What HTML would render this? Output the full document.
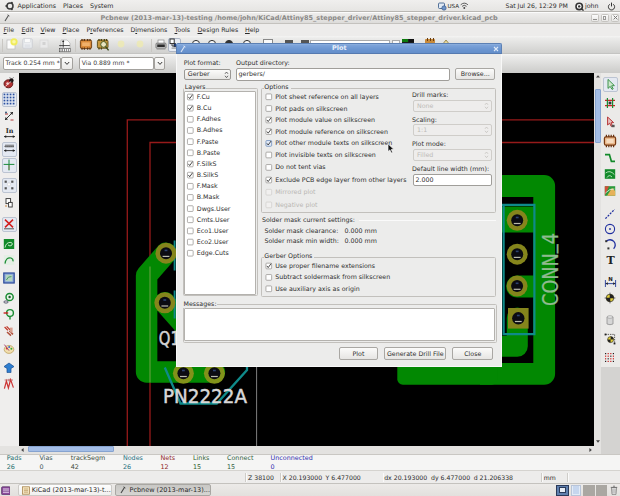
<!DOCTYPE html>
<html><head><meta charset="utf-8"><title>Pcbnew Plot</title>
<style>
html,body{margin:0;padding:0}
body{width:620px;height:496px;position:relative;overflow:hidden;background:#edeceb;font-family:"DejaVu Sans","Liberation Sans",sans-serif;font-size:6.3px;color:#2e2e2e}
.a{position:absolute}
.t{position:absolute;white-space:nowrap}
.btn{position:absolute;box-sizing:border-box;border:0.8px solid #a9a7a3;border-radius:2px;background:linear-gradient(#fbfbfa,#e6e5e3);text-align:center;color:#2e2e2e}
.combo{position:absolute;box-sizing:border-box;border:0.8px solid #9a9894;border-radius:2px;background:linear-gradient(#fbfbfa,#e6e5e3)}
.entry{position:absolute;box-sizing:border-box;border:0.8px solid #a09e9a;border-radius:2px;background:#fff}
.grp{position:absolute;box-sizing:border-box;border:0.8px solid #c2c0bc;border-radius:1.5px}
u{text-decoration:underline;text-decoration-thickness:0.5px;text-underline-offset:0.8px}
</style></head><body>

<div class="a" style="left:0px;top:0px;width:620px;height:12px;background:linear-gradient(#f0efee,#e6e5e3);border-bottom:0.8px solid #b9b7b3;box-sizing:border-box"></div>
<svg class="a" style="left:5px;top:1px" width="10" height="10" viewBox="0 0 10 10"><circle cx="5" cy="5" r="3" fill="none" stroke="#3a3a3a" stroke-width="1.5"/><circle cx="1.3" cy="5" r="1" fill="#3a3a3a"/><circle cx="6.9" cy="1.7" r="1" fill="#3a3a3a"/><circle cx="6.9" cy="8.3" r="1" fill="#3a3a3a"/></svg>
<div class="t" style="left:17.5px;top:1.50px;line-height:8px;font-size:6.3px;color:#2a2a2a;">Applications</div>
<div class="t" style="left:63px;top:1.50px;line-height:8px;font-size:6.3px;color:#2a2a2a;">Places</div>
<div class="t" style="left:90px;top:1.50px;line-height:8px;font-size:6.3px;color:#2a2a2a;">System</div>
<svg class="a" style="left:438px;top:1.5px" width="9" height="9" viewBox="0 0 9 9"><rect x="0.5" y="1" width="6" height="5.5" rx="1" fill="#dfe9f5" stroke="#44648f" stroke-width="0.9"/><circle cx="6" cy="6" r="2.2" fill="#6f95c9" stroke="#2f4f7f" stroke-width="0.6"/></svg>
<div class="t" style="left:447.5px;top:1.50px;line-height:8px;font-size:5.6px;color:#2a2a2a;">USA</div>
<svg class="a" style="left:460.3px;top:2px" width="8.6" height="7.8" viewBox="0 0 10 9"><path d="M0.8 3.2 Q5 -0.6 9.2 3.2" fill="none" stroke="#444" stroke-width="1"/><path d="M2.4 5 Q5 2.6 7.6 5" fill="none" stroke="#444" stroke-width="1"/><circle cx="5" cy="7" r="1.1" fill="#444"/></svg>
<div class="t" style="left:505.5px;top:1.50px;line-height:8px;font-size:6.2px;color:#2a2a2a;">Sat Jul 26, 12:29 PM</div>
<svg class="a" style="left:574.5px;top:1.5px" width="9" height="9" viewBox="0 0 9 9"><circle cx="4.2" cy="4.4" r="3.2" fill="#fff" stroke="#333" stroke-width="1.6"/><circle cx="4.2" cy="4.4" r="1.2" fill="#333"/><path d="M6 6.5 L8.6 8.6" stroke="#333" stroke-width="1.4"/></svg>
<div class="t" style="left:585px;top:1.50px;line-height:8px;font-size:6.3px;color:#2a2a2a;">john</div>
<svg class="a" style="left:607px;top:1.5px" width="9" height="9" viewBox="0 0 9 9"><path d="M2.7 2.3 A3.1 3.1 0 1 0 6.3 2.3" fill="none" stroke="#333" stroke-width="1"/><path d="M4.5 0.6 V4.4" stroke="#333" stroke-width="1"/></svg>
<div class="a" style="left:0px;top:12px;width:620px;height:11.5px;background:linear-gradient(#eeedec,#dddcda);border-top:0.6px solid #fbfbfb;border-bottom:0.6px solid #c4c2be;box-sizing:border-box"></div>
<svg class="a" style="left:4px;top:14px" width="6" height="8" viewBox="0 0 6 8"><path d="M1 7 L4.6 1.2" stroke="#555" stroke-width="1.1"/><path d="M3.6 0.8 L5.4 2" stroke="#555" stroke-width="1"/></svg>
<div class="t" style="left:100.5px;top:13.60px;line-height:8px;font-size:6.5px;color:#8a8987;font-weight:bold;">Pcbnew (2013-mar-13)-testing /home/john/KiCad/Attiny85_stepper_driver/Attiny85_stepper_driver.kicad_pcb</div>
<div class="a" style="left:590.5px;top:13.5px;width:8.5px;height:8.5px;box-sizing:border-box;border:0.7px solid #c6c4c0;border-radius:1.5px;background:linear-gradient(#fbfbfb,#e9e8e6)"></div>
<div class="a" style="left:592.8px;top:19.3px;width:3.8px;height:0.9px;background:#8f8e8c"></div>
<div class="a" style="left:600.5px;top:13.5px;width:8.5px;height:8.5px;box-sizing:border-box;border:0.7px solid #c6c4c0;border-radius:1.5px;background:linear-gradient(#fbfbfb,#e9e8e6)"></div>
<div class="a" style="left:603.1px;top:15.8px;width:3.2px;height:3.8px;box-sizing:border-box;border:0.8px solid #9a9997"></div>
<div class="a" style="left:610.5px;top:13.5px;width:8.5px;height:8.5px;box-sizing:border-box;border:0.7px solid #c6c4c0;border-radius:1.5px;background:linear-gradient(#fbfbfb,#e9e8e6)"></div>
<svg class="a" style="left:612.5px;top:15.3px" width="5" height="5" viewBox="0 0 5 5"><path d="M0.6 0.6 L4.4 4.4 M4.4 0.6 L0.6 4.4" stroke="#7c7b79" stroke-width="1"/></svg>
<div class="a" style="left:0px;top:23.5px;width:620px;height:12.5px;background:#edeceb"></div>
<div class="t" style="left:3.5px;top:25.60px;line-height:8px;font-size:6.3px;color:#2a2a2a;"><u>F</u>ile</div>
<div class="t" style="left:21.5px;top:25.60px;line-height:8px;font-size:6.3px;color:#2a2a2a;"><u>E</u>dit</div>
<div class="t" style="left:40.5px;top:25.60px;line-height:8px;font-size:6.3px;color:#2a2a2a;"><u>V</u>iew</div>
<div class="t" style="left:62.5px;top:25.60px;line-height:8px;font-size:6.3px;color:#2a2a2a;"><u>P</u>lace</div>
<div class="t" style="left:86.5px;top:25.60px;line-height:8px;font-size:6.3px;color:#2a2a2a;">P<u>r</u>eferences</div>
<div class="t" style="left:130.5px;top:25.60px;line-height:8px;font-size:6.3px;color:#2a2a2a;">D<u>i</u>mensions</div>
<div class="t" style="left:174.5px;top:25.60px;line-height:8px;font-size:6.3px;color:#2a2a2a;"><u>T</u>ools</div>
<div class="t" style="left:197.5px;top:25.60px;line-height:8px;font-size:6.3px;color:#2a2a2a;"><u>D</u>esign Rules</div>
<div class="t" style="left:245px;top:25.60px;line-height:8px;font-size:6.3px;color:#2a2a2a;"><u>H</u>elp</div>
<div class="a" style="left:0px;top:36px;width:620px;height:18px;background:linear-gradient(#f4f4f3 0%,#ebebea 14%,#d0d0ce 100%);border-bottom:1px solid #c4c4c2;box-sizing:border-box"></div>
<div class="a" style="left:0px;top:54px;width:620px;height:18.5px;background:linear-gradient(#f5f5f4 0%,#ebebea 14%,#cbcbc9 100%)"></div>
<div class="a" style="left:1.5px;top:38.5px;width:0.7px;height:13px;background:#c9c7c3"></div>
<div class="a" style="left:75px;top:38.5px;width:0.7px;height:13px;background:#c9c7c3"></div>
<div class="a" style="left:151px;top:38.5px;width:0.7px;height:13px;background:#c9c7c3"></div>
<svg class="a" style="left:6px;top:37.5px" width="12" height="12" viewBox="0 0 12 12"><rect x="1" y="2" width="8" height="9" fill="#fcfcfc" stroke="#b9b9b9" stroke-width="0.7"/><circle cx="8" cy="3.8" r="3.6" fill="#f0ec5c"/><circle cx="8" cy="3.8" r="1.8" fill="#fbf8a6"/></svg>
<svg class="a" style="left:22px;top:38px" width="11" height="11" viewBox="0 0 11 11"><rect x="0.8" y="0.8" width="9.4" height="9.4" rx="0.8" fill="#eceef1" stroke="#c6c9cf" stroke-width="0.8"/><rect x="2.6" y="0.8" width="5.6" height="3.8" fill="#fafafa" stroke="#d0d3d8" stroke-width="0.5"/><rect x="2.6" y="6.4" width="5.8" height="3.8" fill="#dfe2e7"/></svg>
<svg class="a" style="left:39px;top:38.5px" width="10" height="10" viewBox="0 0 10 10"><rect x="1" y="1" width="8" height="8" fill="#e9e9e9" stroke="#d6d6d6" stroke-width="0.7"/><rect x="3.5" y="3" width="3" height="3" fill="#d2d2d2"/></svg>
<svg class="a" style="left:58px;top:38.5px" width="14" height="14" viewBox="0 0 14 14"><path d="M3 1 H9 L12 4 V9 H3 Z" fill="#fdfdfd" stroke="#a9a9a9" stroke-width="0.6"/><path d="M5.2 1.5 V8.6 M1.2 6.6 H11.8" stroke="#222" stroke-width="0.8"/><path d="M4 3 L5.2 1.2 L6.4 3 Z" fill="#222"/><rect x="1.6" y="9.6" width="10.6" height="3.2" fill="#fff" stroke="#444" stroke-width="0.6"/><path d="M3 10 V12.4 M4.6 10 V12.4 M6.5 10 V12.4 M8.4 10 V12.4 M10.4 10 V12.4" stroke="#333" stroke-width="0.6"/></svg>
<svg class="a" style="left:79px;top:37.5px" width="14" height="13" viewBox="0 0 14 13"><rect x="1.4" y="2" width="11.2" height="8.6" rx="1.4" fill="#d98a3a" stroke="#6e3c10" stroke-width="0.9"/><path d="M3 1 V3 M5.4 1 V3 M8.6 1 V3 M11 1 V3 M3 9.6 V11.8 M5.4 9.6 V11.8 M8.6 9.6 V11.8 M11 9.6 V11.8" stroke="#5b3412" stroke-width="1.2"/><rect x="3.2" y="4.4" width="7.6" height="3.6" fill="#f0b06a"/></svg>
<svg class="a" style="left:95.5px;top:37.5px" width="14" height="14" viewBox="0 0 14 14"><rect x="1.4" y="2" width="10.6" height="8.2" rx="1.4" fill="#c99a42" stroke="#5a4a14" stroke-width="0.9"/><path d="M3 1 V3 M5.4 1 V3 M8.4 1 V3 M10.6 1 V3 M3 9.4 V11.4 M5.4 9.4 V11.4" stroke="#4d4212" stroke-width="1.2"/><circle cx="7.6" cy="6.4" r="2.9" fill="#e9e4c0" stroke="#4a5a20" stroke-width="1"/><path d="M9.6 8.6 L12.6 12.4" stroke="#3c4a1c" stroke-width="1.5"/></svg>
<svg class="a" style="left:116px;top:39px" width="10" height="10" viewBox="0 0 10 10"><circle cx="5" cy="5" r="3.4" fill="#eeeab0" opacity="0.8"/></svg>
<svg class="a" style="left:135px;top:39px" width="10" height="10" viewBox="0 0 10 10"><circle cx="5" cy="5" r="3.4" fill="#eeeab0" opacity="0.8"/></svg>
<svg class="a" style="left:154.5px;top:38.5px" width="12" height="12" viewBox="0 0 12 12"><rect x="3" y="1" width="6" height="3.6" fill="#fdfdfd" stroke="#777" stroke-width="0.6"/><rect x="1" y="4.2" width="10" height="5" rx="0.8" fill="#cfcfcf" stroke="#555" stroke-width="0.7"/><rect x="2.2" y="5.4" width="7.6" height="2.6" fill="#2b2b2b"/><rect x="1.6" y="9.4" width="8.8" height="1.2" fill="#9a9a9a"/></svg>
<div class="a" style="left:168px;top:37.5px;width:12.5px;height:14px;box-sizing:border-box;border:0.7px solid #aeb6c4;border-radius:2px;background:#e8ecf3"></div>
<svg class="a" style="left:169px;top:38px" width="11" height="12" viewBox="0 0 11 12"><rect x="1" y="1" width="4.2" height="4.6" fill="#fff" stroke="#222" stroke-width="0.9"/><rect x="5" y="5.6" width="4.8" height="3.2" fill="#1f3f7f" stroke="#222" stroke-width="0.6"/><path d="M3 5.6 V8 H5" stroke="#222" stroke-width="0.8" fill="none"/><rect x="2.6" y="9.6" width="7" height="1" fill="#888"/></svg>
<svg class="a" style="left:191px;top:38.5px" width="10" height="10" viewBox="0 0 10 10"><circle cx="5" cy="5" r="3.6" fill="#f6f6f6" stroke="#333" stroke-width="1"/></svg>
<svg class="a" style="left:207.3px;top:38.5px" width="10" height="10" viewBox="0 0 10 10"><circle cx="5" cy="5" r="3.6" fill="#f6f6f6" stroke="#333" stroke-width="1"/></svg>
<svg class="a" style="left:224px;top:38.5px" width="10" height="10" viewBox="0 0 10 10"><circle cx="5" cy="5" r="3.6" fill="#333" stroke="#333" stroke-width="1"/></svg>
<svg class="a" style="left:241.6px;top:38.5px" width="10" height="10" viewBox="0 0 10 10"><circle cx="5" cy="5" r="3.6" fill="#f6f6f6" stroke="#333" stroke-width="1"/></svg>
<div class="a" style="left:262.5px;top:39px;width:10px;height:8px;box-sizing:border-box;border:0.7px solid #888;background:#fafafa"></div>
<div class="a" style="left:284.5px;top:40px;width:8px;height:4px;background:#555"></div>
<div class="a" style="left:301px;top:40px;width:8px;height:4px;background:#555"></div>
<div class="a" style="left:320.5px;top:40px;width:14px;height:4px;background:#555"></div>
<div class="a" style="left:310px;top:39.5px;width:80px;height:10px;background:#fff;border:0.6px solid #aaa;box-sizing:border-box"></div>
<div class="a" style="left:392px;top:39.5px;width:7.5px;height:10px;background:#fafafa;border:0.6px solid #aaa;box-sizing:border-box"></div>
<div class="a" style="left:402px;top:38.5px;width:12px;height:10px;background:#1c1c1c"></div>
<div class="a" style="left:402px;top:38.5px;width:6px;height:3.2px;background:#0c7a0c"></div>
<div class="a" style="left:408.5px;top:38.5px;width:5.5px;height:3.2px;background:#111"></div>
<div class="a" style="left:425px;top:38.8px;width:10px;height:6px;background:#c88a3a;border-radius:1px"></div>
<div class="a" style="left:426.5px;top:38.2px;width:1.2px;height:3px;background:#6a3c10"></div>
<div class="a" style="left:429.5px;top:38.2px;width:1.2px;height:3px;background:#6a3c10"></div>
<div class="a" style="left:432.5px;top:38.2px;width:1.2px;height:3px;background:#6a3c10"></div>
<svg class="a" style="left:441px;top:38.5px" width="10" height="8" viewBox="0 0 10 8"><path d="M1 6 L5 1 L9 6" fill="#e8d9a0" stroke="#8a7a3a" stroke-width="0.8"/></svg>
<div class="a" style="left:2.8px;top:56.5px;width:58.3px;height:13.5px;box-sizing:border-box;border:0.8px solid #a3a19d;border-radius:2px;background:#fff"></div>
<div class="a" style="left:61.39999999999999px;top:56.5px;width:11.2px;height:13.5px;box-sizing:border-box;border:0.8px solid #a3a19d;border-radius:2px;background:linear-gradient(#fcfcfb,#e9e8e6)"></div>
<svg class="a" style="left:63.99999999999999px;top:61px" width="6" height="5" viewBox="0 0 6 5"><path d="M0.8 1 L3 3.4 L5.2 1" fill="none" stroke="#333" stroke-width="1"/></svg>
<div class="t" style="left:5.6px;top:59.00px;line-height:8px;font-size:6.1px;color:#3a3a3a;">Track 0.254 mm *</div>
<div class="a" style="left:79px;top:56.5px;width:75px;height:13.5px;box-sizing:border-box;border:0.8px solid #a3a19d;border-radius:2px;background:#fff"></div>
<div class="a" style="left:154.3px;top:56.5px;width:11.2px;height:13.5px;box-sizing:border-box;border:0.8px solid #a3a19d;border-radius:2px;background:linear-gradient(#fcfcfb,#e9e8e6)"></div>
<svg class="a" style="left:156.9px;top:61px" width="6" height="5" viewBox="0 0 6 5"><path d="M0.8 1 L3 3.4 L5.2 1" fill="none" stroke="#333" stroke-width="1"/></svg>
<div class="t" style="left:81.8px;top:59.00px;line-height:8px;font-size:6.1px;color:#3a3a3a;">Via 0.889 mm *</div>
<div class="a" style="left:0px;top:72.5px;width:19px;height:373px;background:#efeeed"></div>
<div class="a" style="left:601px;top:72.5px;width:19px;height:381px;background:#ebeae8"></div>
<div class="a" style="left:601px;top:366.5px;width:19px;height:87px;background:#d4d3d1"></div>
<svg class="a" style="left:19px;top:72.5px" width="575" height="373.5" viewBox="19 72.5 575 373.5">
<rect x="19" y="72.5" width="575" height="373.5" fill="#000"/>
<path d="M127.3 446 V119.4 H594 M150 446 V142 H594" fill="none" stroke="#961a1a" stroke-width="1.3"/>
<path d="M256.6 366 V446" stroke="#8c8c8c" stroke-width="0.9"/>
<path d="M166 252.7 L146.6 275 V371.5 H214.4" fill="none" stroke="#028802" stroke-width="21.5" stroke-linejoin="round" stroke-linecap="round"/>
<path d="M164.8 302.3 L185 325" fill="none" stroke="#028802" stroke-width="21.5" stroke-linecap="round"/>
<path d="M150 266 V382" stroke="#5e9e3c" stroke-width="1.2"/>
<path d="M174.6 240 V270 M174.6 290 V318" stroke="#0f8a8a" stroke-width="1.9" fill="none"/>
<path d="M164.8 367 L180.5 403 H216.8 L247 369.5 V340" stroke="#0f8a8a" stroke-width="2.3" fill="none"/>
<circle cx="166" cy="252.7" r="10.5" fill="#85851c"/>
<circle cx="166" cy="252.7" r="6" fill="#0b0b12"/>
<rect x="162.6" y="255.29999999999998" width="6.8" height="1.2" fill="#d8d8c8" opacity="0.85"/>
<rect x="164.6" y="249.1" width="2.8" height="1.6" fill="#3a5a9a" opacity="0.7"/>
<circle cx="164.8" cy="302.3" r="10.5" fill="#85851c"/>
<circle cx="164.8" cy="302.3" r="6" fill="#0b0b12"/>
<rect x="161.4" y="304.90000000000003" width="6.8" height="1.2" fill="#d8d8c8" opacity="0.85"/>
<rect x="163.4" y="298.7" width="2.8" height="1.6" fill="#3a5a9a" opacity="0.7"/>
<circle cx="183.4" cy="372.8" r="10.5" fill="#82921a"/>
<circle cx="183.4" cy="372.8" r="6" fill="#0b0b12"/>
<rect x="180.0" y="375.40000000000003" width="6.8" height="1.2" fill="#d8d8c8" opacity="0.85"/>
<rect x="182.0" y="369.2" width="2.8" height="1.6" fill="#3a5a9a" opacity="0.7"/>
<circle cx="214.4" cy="372.8" r="10.5" fill="#82921a"/>
<circle cx="214.4" cy="372.8" r="6" fill="#0b0b12"/>
<rect x="211.0" y="375.40000000000003" width="6.8" height="1.2" fill="#d8d8c8" opacity="0.85"/>
<rect x="213.0" y="369.2" width="2.8" height="1.6" fill="#3a5a9a" opacity="0.7"/>
<text x="158.8" y="344.5" font-family="'DejaVu Sans','Liberation Sans',sans-serif" font-size="19" fill="#d4d4d4" stroke="#d4d4d4" stroke-width="0.5" textLength="21" lengthAdjust="spacingAndGlyphs">Q1</text>
<text x="163" y="402.8" font-family="'DejaVu Sans','Liberation Sans',sans-serif" font-size="19.5" fill="#d8d8d8" stroke="#d8d8d8" stroke-width="0.5" textLength="84" lengthAdjust="spacingAndGlyphs">PN2222A</text>
<path d="M480 185.5 H544.2 V373.3 H480" fill="none" stroke="#028802" stroke-width="21.8" stroke-linejoin="round"/>
<rect x="397.3" y="350" width="100" height="34.2" rx="5.5" fill="#028802"/>
<path d="M480 219 H540" fill="none" stroke="#028802" stroke-width="26" />
<path d="M517.2 286 H540" fill="none" stroke="#028802" stroke-width="22" stroke-linecap="round"/>
<path d="M517.3 317.5 V345.8 H480" fill="none" stroke="#028802" stroke-width="21" stroke-linecap="round" stroke-linejoin="round"/>
<path d="M495 204.3 H534.4 V333.6 H503.6 V204.3" fill="none" stroke="#0f8a8a" stroke-width="2.2"/>
<circle cx="517.2" cy="219.8" r="10.5" fill="#85851c"/>
<circle cx="517.2" cy="219.8" r="6" fill="#0b0b12"/>
<rect x="513.8000000000001" y="222.4" width="6.8" height="1.2" fill="#d8d8c8" opacity="0.85"/>
<rect x="515.8000000000001" y="216.20000000000002" width="2.8" height="1.6" fill="#3a5a9a" opacity="0.7"/>
<circle cx="517.2" cy="253.7" r="10.5" fill="#85851c"/>
<circle cx="517.2" cy="253.7" r="6" fill="#0b0b12"/>
<rect x="513.8000000000001" y="256.3" width="6.8" height="1.2" fill="#d8d8c8" opacity="0.85"/>
<rect x="515.8000000000001" y="250.1" width="2.8" height="1.6" fill="#3a5a9a" opacity="0.7"/>
<circle cx="517.1" cy="285.6" r="10.5" fill="#85851c"/>
<circle cx="517.1" cy="285.6" r="6" fill="#0b0b12"/>
<rect x="513.7" y="288.20000000000005" width="6.8" height="1.2" fill="#d8d8c8" opacity="0.85"/>
<rect x="515.7" y="282.0" width="2.8" height="1.6" fill="#3a5a9a" opacity="0.7"/>
<rect x="507.99999999999994" y="307.5" width="20.6" height="20.6" fill="#85851c"/>
<circle cx="518.3" cy="317.8" r="6.2" fill="#0b0b12"/>
<rect x="514.9" y="320.40000000000003" width="6.8" height="1.2" fill="#d8d8c8" opacity="0.85"/>
<rect x="516.9" y="314.2" width="2.8" height="1.6" fill="#3a5a9a" opacity="0.7"/>
<text transform="translate(557.5,305.5) rotate(-90)" font-family="'DejaVu Sans','Liberation Sans',sans-serif" font-size="20.5" fill="#90ba90" stroke="#90ba90" stroke-width="0.25" textLength="73" lengthAdjust="spacingAndGlyphs">CONN<tspan dy="-4.6">_</tspan><tspan dy="4.6">4</tspan></text>
</svg>
<div class="a" style="left:594px;top:72.5px;width:7px;height:381px;background:#e3e2e0"></div>
<div class="a" style="left:594.5px;top:88.5px;width:6px;height:54.5px;background:#a3bde6;border:0.6px solid #86a3d0;box-sizing:border-box;border-radius:1px"></div>
<svg class="a" style="left:594.5px;top:74px" width="6" height="5" viewBox="0 0 6 5"><path d="M1 3.6 L3 1.2 L5 3.6 Z" fill="#444"/></svg>
<svg class="a" style="left:594.5px;top:439px" width="6" height="5" viewBox="0 0 6 5"><path d="M1 1.2 L3 3.8 L5 1.2 Z" fill="#444"/></svg>
<div class="a" style="left:19px;top:446px;width:575px;height:7.5px;background:#e3e2e0"></div>
<div class="a" style="left:27.5px;top:446.3px;width:86.5px;height:6.2px;background:#a3bde6;border:0.6px solid #86a3d0;box-sizing:border-box;border-radius:1px"></div>
<svg class="a" style="left:20px;top:447px" width="5" height="6" viewBox="0 0 5 6"><path d="M3.6 1 L1.2 3 L3.6 5 Z" fill="#444"/></svg>
<svg class="a" style="left:588px;top:447px" width="5" height="6" viewBox="0 0 5 6"><path d="M1.4 1 L3.8 3 L1.4 5 Z" fill="#444"/></svg>
<div class="a" style="left:0px;top:445.5px;width:19px;height:8px;background:#e4e3e1"></div>
<svg class="a" style="left:3.1999999999999993px;top:77px" width="12" height="12" viewBox="0 0 12 12"><ellipse cx="5.4" cy="6.8" rx="4.4" ry="4" fill="#b23232" stroke="#5a1414" stroke-width="0.9"/><circle cx="8.4" cy="3.4" r="2.2" fill="#1c1414"/><path d="M2.4 9.4 L8.2 4.4" stroke="#f4dada" stroke-width="0.9"/><circle cx="4.6" cy="6.6" r="1.3" fill="#f0d0d0"/><path d="M9.6 1.2 L10.6 0.4 M7.2 1.2 L6.8 0.2" stroke="#222" stroke-width="0.6"/></svg>
<div class="a" style="left:1.5px;top:91.5px;width:15.5px;height:15px;box-sizing:border-box;border:0.7px solid #bcc4d2;border-radius:2px;background:#e4e9f2"></div>
<svg class="a" style="left:3.1999999999999993px;top:93px" width="12" height="12" viewBox="0 0 12 12"><rect x="0.6" y="0.6" width="1.7" height="1.7" fill="#2a4f9f"/><rect x="0.6" y="3.65" width="1.7" height="1.7" fill="#2a4f9f"/><rect x="0.6" y="6.699999999999999" width="1.7" height="1.7" fill="#2a4f9f"/><rect x="0.6" y="9.749999999999998" width="1.7" height="1.7" fill="#2a4f9f"/><rect x="3.65" y="0.6" width="1.7" height="1.7" fill="#2a4f9f"/><rect x="3.65" y="3.65" width="1.7" height="1.7" fill="#2a4f9f"/><rect x="3.65" y="6.699999999999999" width="1.7" height="1.7" fill="#2a4f9f"/><rect x="3.65" y="9.749999999999998" width="1.7" height="1.7" fill="#2a4f9f"/><rect x="6.699999999999999" y="0.6" width="1.7" height="1.7" fill="#2a4f9f"/><rect x="6.699999999999999" y="3.65" width="1.7" height="1.7" fill="#2a4f9f"/><rect x="6.699999999999999" y="6.699999999999999" width="1.7" height="1.7" fill="#2a4f9f"/><rect x="6.699999999999999" y="9.749999999999998" width="1.7" height="1.7" fill="#2a4f9f"/><rect x="9.749999999999998" y="0.6" width="1.7" height="1.7" fill="#2a4f9f"/><rect x="9.749999999999998" y="3.65" width="1.7" height="1.7" fill="#2a4f9f"/><rect x="9.749999999999998" y="6.699999999999999" width="1.7" height="1.7" fill="#2a4f9f"/><rect x="9.749999999999998" y="9.749999999999998" width="1.7" height="1.7" fill="#2a4f9f"/></svg>
<svg class="a" style="left:3.1999999999999993px;top:109.5px" width="12" height="12" viewBox="0 0 12 12"><path d="M2 10 L10 2" stroke="#222" stroke-width="0.9"/><path d="M10 2 L7 2.6 L9.4 5 Z M2 10 L2.6 7 L5 9.4 Z" fill="#222"/><path d="M2 4 H5 M7.5 10 H10.5" stroke="#a22" stroke-width="0.9"/><circle cx="3" cy="2.6" r="1" fill="#357"/></svg>
<svg class="a" style="left:3px;top:126.5px" width="13" height="12" viewBox="0 0 13 12"><text x="6.5" y="6.4" font-family="'DejaVu Serif','Liberation Serif',serif" font-weight="bold" font-size="6.4" text-anchor="middle" fill="#222">In</text><path d="M1.2 9.6 H11.8" stroke="#222" stroke-width="0.9"/><path d="M1 9.6 L3.2 8.2 V11 Z M12 9.6 L9.8 8.2 V11 Z" fill="#222"/></svg>
<div class="a" style="left:1.5px;top:141.5px;width:15.5px;height:15px;box-sizing:border-box;border:0.7px solid #bcc4d2;border-radius:2px;background:#e4e9f2"></div>
<svg class="a" style="left:3px;top:143px" width="13" height="12" viewBox="0 0 13 12"><path d="M1.5 3.4 H11.5" stroke="#222" stroke-width="0.8" stroke-dasharray="1.2 0.8"/><path d="M1.2 7.6 H11.8" stroke="#222" stroke-width="0.9"/><path d="M1 7.6 L3.2 6.2 V9 Z M12 7.6 L9.8 6.2 V9 Z" fill="#222"/><rect x="2" y="1.6" width="9" height="2.8" fill="#555" opacity="0.6"/></svg>
<div class="a" style="left:1.5px;top:157.5px;width:15.5px;height:15px;box-sizing:border-box;border:0.7px solid #bcc4d2;border-radius:2px;background:#e4e9f2"></div>
<svg class="a" style="left:3.1999999999999993px;top:159px" width="12" height="12" viewBox="0 0 12 12"><path d="M6 0.6 V11.4 M0.6 5.4 H11.4" stroke="#1a8a3a" stroke-width="1"/><path d="M6 6 V11" stroke="#863" stroke-width="0.6"/></svg>
<div class="a" style="left:1.5px;top:177.5px;width:15.5px;height:15px;box-sizing:border-box;border:0.7px solid #bcc4d2;border-radius:2px;background:#e4e9f2"></div>
<svg class="a" style="left:3.1999999999999993px;top:179px" width="12" height="12" viewBox="0 0 12 12"><rect x="1.6" y="1.6" width="2.2" height="2.2" fill="#555"/><rect x="8.2" y="1.6" width="2.2" height="2.2" fill="#555"/><rect x="1.6" y="8.2" width="2.2" height="2.2" fill="#555"/><rect x="8.2" y="8.2" width="2.2" height="2.2" fill="#555"/><circle cx="6" cy="5.4" r="1.6" fill="#fff" stroke="#bbb" stroke-width="0.4"/></svg>
<svg class="a" style="left:3.1999999999999993px;top:197px" width="12" height="12" viewBox="0 0 12 12"><rect x="3" y="1.6" width="4.6" height="5" fill="#fff" stroke="#333" stroke-width="0.9"/><rect x="5.6" y="5.4" width="3.6" height="4.6" fill="#fff" stroke="#333" stroke-width="0.9"/><path d="M2 9 H4" stroke="#c84" stroke-width="1"/></svg>
<div class="a" style="left:1.5px;top:216.5px;width:15.5px;height:15px;box-sizing:border-box;border:0.7px solid #bcc4d2;border-radius:2px;background:#e4e9f2"></div>
<svg class="a" style="left:3.1999999999999993px;top:218px" width="12" height="12" viewBox="0 0 12 12"><path d="M2 1.6 L10 9.4 M10 1.6 L2 9.4" stroke="#d21f1f" stroke-width="1.5"/><path d="M1 10.8 H11" stroke="#333" stroke-width="0.8"/></svg>
<svg class="a" style="left:3.1999999999999993px;top:237.5px" width="12" height="12" viewBox="0 0 12 12"><rect x="0.8" y="1" width="10.4" height="10" fill="#128a2a"/><path d="M2 9.6 Q3 4 8 4.4 Q10 5 9 7 Q7 9 5 7" stroke="#d8f0d8" stroke-width="0.9" fill="none"/></svg>
<svg class="a" style="left:3.1999999999999993px;top:254px" width="12" height="12" viewBox="0 0 12 12"><rect x="0.8" y="1" width="10.4" height="10" fill="#e4efe4"/><path d="M2 9.6 Q3 3 8 4 Q10.4 5 10 7.4" stroke="#1c8c34" stroke-width="1.2" fill="none"/></svg>
<svg class="a" style="left:3.1999999999999993px;top:271.5px" width="12" height="12" viewBox="0 0 12 12"><rect x="0.8" y="1" width="10.4" height="10" fill="#8aa6d8" stroke="#2b4a9a" stroke-width="1.2"/><rect x="2.6" y="2.8" width="6.8" height="6.4" fill="#b4d4c0"/><path d="M3.4 8 Q5 4 8.4 4.6" stroke="#2a8a4a" stroke-width="0.8" fill="none"/></svg>
<svg class="a" style="left:3.1999999999999993px;top:291.5px" width="12" height="12" viewBox="0 0 12 12"><circle cx="6.6" cy="5" r="3.6" fill="#eaf4ea" stroke="#1c8c34" stroke-width="1.5"/><circle cx="6.6" cy="5" r="1.2" fill="#1c5c2c"/><ellipse cx="3" cy="10" rx="2.2" ry="1.1" fill="none" stroke="#224" stroke-width="0.7"/></svg>
<svg class="a" style="left:3.1999999999999993px;top:308px" width="12" height="12" viewBox="0 0 12 12"><circle cx="7" cy="5" r="3.4" fill="#eaf4ea" stroke="#1c8c34" stroke-width="1.4"/><path d="M0.6 5 H5.2" stroke="#c22" stroke-width="1.4"/><path d="M7 8 V11.4" stroke="#1c8c34" stroke-width="1.4"/></svg>
<svg class="a" style="left:3.1999999999999993px;top:325px" width="12" height="12" viewBox="0 0 12 12"><path d="M1.6 2 L5 5.4 M3.6 1.4 L8.6 6.4" stroke="#c0392b" stroke-width="1.3"/><path d="M4 7 L8 10.6 M6.4 6 L10 9.4" stroke="#b0503b" stroke-width="1.5"/><rect x="7" y="2.6" width="2.6" height="5" fill="#d8a090"/></svg>
<svg class="a" style="left:3.1999999999999993px;top:342.5px" width="12" height="12" viewBox="0 0 12 12"><ellipse cx="6" cy="6.4" rx="4.8" ry="4" fill="#f1dfae" stroke="#b79a55" stroke-width="0.7"/><circle cx="3.8" cy="5.6" r="1" fill="#d33"/><circle cx="6.2" cy="4" r="1" fill="#36c"/><circle cx="8.4" cy="5.8" r="1" fill="#3a3"/><path d="M1.4 1.6 L6 7.6" stroke="#a47" stroke-width="1"/></svg>
<svg class="a" style="left:3.1999999999999993px;top:361px" width="12" height="12" viewBox="0 0 12 12"><path d="M1 5.6 L6 2 L11 5.6 L8 7.4 V11.6 H4 V7.4 Z" fill="#2f7fd0" stroke="#1b4f92" stroke-width="0.7"/></svg>
<svg class="a" style="left:3.1999999999999993px;top:377.5px" width="12" height="12" viewBox="0 0 12 12"><path d="M1.4 10.6 L3.4 3 L5.4 10 L7.6 1.6 L10.4 9.6" fill="none" stroke="#c33" stroke-width="1.2"/><path d="M1.6 2 H10 M6 0.8 V3.4" stroke="#b55" stroke-width="0.8"/></svg>
<div class="a" style="left:602.5px;top:76.5px;width:15.5px;height:15px;box-sizing:border-box;border:0.7px solid #bcc4d2;border-radius:2px;background:#e4e9f2"></div>
<svg class="a" style="left:604.3px;top:78px" width="12" height="12" viewBox="0 0 12 12"><path d="M4 1.4 L4 10.4 L6.2 8.4 L8 11.4 L9.2 10.8 L7.6 7.8 L10.4 7.6 Z" fill="#cfe8cf" stroke="#2c8a3c" stroke-width="0.9"/></svg>
<svg class="a" style="left:604.3px;top:97px" width="12" height="12" viewBox="0 0 12 12"><path d="M1 3.4 H11 M1 8.6 H11" stroke="#c22" stroke-width="1.2"/><path d="M3.4 1 V11 M8.6 1 V11" stroke="#1c8c34" stroke-width="1.2"/><rect x="4.6" y="4.6" width="2.8" height="2.8" fill="#333"/></svg>
<svg class="a" style="left:604.3px;top:116px" width="12" height="12" viewBox="0 0 12 12"><path d="M3.6 1 L3.6 9 L5.6 7.2 L7.2 10.4 L8.4 9.8 L7 6.8 L9.6 6.6 Z" fill="#e8c0c0" stroke="#b02222" stroke-width="0.9"/><rect x="7.6" y="8.8" width="3" height="2.4" fill="#555"/></svg>
<svg class="a" style="left:603.3px;top:134px" width="14" height="14" viewBox="0 0 14 14"><rect x="1.4" y="2.8" width="11.2" height="8.4" rx="1.6" fill="#e9b88c" stroke="#7a3a10" stroke-width="1.2"/><rect x="3.4" y="5" width="7.2" height="4" fill="#f6dcc0"/><path d="M3.4 0.8 V3 M5.8 0.8 V3 M8.2 0.8 V3 M10.6 0.8 V3 M3.4 11 V13.2 M5.8 11 V13.2 M8.2 11 V13.2 M10.6 11 V13.2" stroke="#6a3210" stroke-width="1.2"/></svg>
<svg class="a" style="left:604.3px;top:151.5px" width="12" height="12" viewBox="0 0 12 12"><path d="M1 2.6 H5.4 L7.4 9.4 H11" fill="none" stroke="#128a2a" stroke-width="1.7"/></svg>
<svg class="a" style="left:604.3px;top:168px" width="12" height="12" viewBox="0 0 12 12"><rect x="0.8" y="1.2" width="10.4" height="9.6" fill="#128a2a"/><path d="M1.6 5 Q6 1.6 10.4 6.6 M3 9.6 Q5 6 8 9" stroke="#d8f0d8" stroke-width="0.8" fill="none"/></svg>
<svg class="a" style="left:604.3px;top:185px" width="12" height="12" viewBox="0 0 12 12"><rect x="0.8" y="1.2" width="10.4" height="9.6" fill="#2c9a3c"/><path d="M0.8 10.8 L5 1.2 H0.8 Z" fill="#d0503a"/><path d="M3 10.8 L8 3 L11.2 6 V10.8 Z" fill="#e6b25a"/><path d="M1.4 8 Q6 3 10.4 4" stroke="#fff" stroke-width="0.7" fill="none"/></svg>
<svg class="a" style="left:604.3px;top:207.5px" width="12" height="12" viewBox="0 0 12 12"><path d="M1.4 10.6 L10.6 1.4" stroke="#1f2f9f" stroke-width="1.3" stroke-dasharray="2 1.2"/></svg>
<svg class="a" style="left:604.3px;top:223px" width="12" height="12" viewBox="0 0 12 12"><circle cx="6" cy="6" r="4.6" fill="none" stroke="#1f2f9f" stroke-width="1.1"/><circle cx="6" cy="6" r="0.9" fill="#1f2f9f"/></svg>
<svg class="a" style="left:604.3px;top:238.5px" width="12" height="12" viewBox="0 0 12 12"><path d="M2.4 2.2 A5 5 0 0 1 9.6 9.8" fill="none" stroke="#1f2f9f" stroke-width="1.3"/><rect x="1.2" y="1.2" width="2" height="2" fill="#333"/><rect x="3.4" y="8.4" width="2" height="2" fill="#333"/></svg>
<svg class="a" style="left:604px;top:254px" width="13" height="13" viewBox="0 0 13 13"><text x="6.5" y="10.4" font-family="'DejaVu Serif','Liberation Serif',serif" font-weight="bold" font-size="11" text-anchor="middle" fill="#222">T</text></svg>
<svg class="a" style="left:604px;top:274.5px" width="13" height="13" viewBox="0 0 13 13"><text x="6.5" y="5.6" font-family="'DejaVu Sans','Liberation Sans',sans-serif" font-weight="bold" font-size="5.4" text-anchor="middle" fill="#222">N</text><path d="M1.4 8.6 H11.6" stroke="#223a9a" stroke-width="0.9"/><path d="M1.4 5 V12 M11.6 5 V12" stroke="#223a9a" stroke-width="0.9"/><path d="M1.6 8.6 L3.8 7.2 V10 Z M11.4 8.6 L9.2 7.2 V10 Z" fill="#222"/></svg>
<svg class="a" style="left:604.3px;top:292px" width="12" height="12" viewBox="0 0 12 12"><circle cx="6" cy="6" r="3.8" fill="#e6d23a" stroke="#222" stroke-width="0.7"/><path d="M6 6 L6 2.2 A3.8 3.8 0 0 1 9.8 6 Z M6 6 L6 9.8 A3.8 3.8 0 0 1 2.2 6 Z" fill="#222"/><path d="M6 0.6 V11.4 M0.6 6 H11.4" stroke="#222" stroke-width="0.6"/></svg>
<svg class="a" style="left:604.3px;top:313.5px" width="12" height="12" viewBox="0 0 12 12"><path d="M3 3 H9 V10 Q6 11.4 3 10 Z" fill="#d6d6d6" stroke="#8f8f8f" stroke-width="0.8"/><ellipse cx="6" cy="3" rx="3" ry="1.2" fill="#efefef" stroke="#8f8f8f" stroke-width="0.7"/></svg>
<svg class="a" style="left:604.3px;top:333px" width="12" height="12" viewBox="0 0 12 12"><circle cx="6.6" cy="6.6" r="3" fill="#e6d23a" stroke="#222" stroke-width="0.6"/><path d="M6.6 6.6 L6.6 3.6 A3 3 0 0 1 9.6 6.6 Z M6.6 6.6 L6.6 9.6 A3 3 0 0 1 3.6 6.6 Z" fill="#222"/><path d="M1.4 1.4 H10.6 V10.6" fill="none" stroke="#222" stroke-width="0.7" stroke-dasharray="1.4 0.9"/><rect x="0.6" y="0.6" width="1.8" height="1.8" fill="#222"/><rect x="9.6" y="9.6" width="1.8" height="1.8" fill="#222"/></svg>
<svg class="a" style="left:604.3px;top:351.5px" width="12" height="12" viewBox="0 0 12 12"><rect x="1.0" y="1.0" width="1.2" height="1.2" fill="#222"/><rect x="1.0" y="3.6" width="1.2" height="1.2" fill="#c22"/><rect x="1.0" y="6.2" width="1.2" height="1.2" fill="#c22"/><rect x="1.0" y="8.8" width="1.2" height="1.2" fill="#222"/><rect x="3.6" y="1.0" width="1.2" height="1.2" fill="#c22"/><rect x="3.6" y="3.6" width="1.2" height="1.2" fill="#c22"/><rect x="3.6" y="6.2" width="1.2" height="1.2" fill="#222"/><rect x="3.6" y="8.8" width="1.2" height="1.2" fill="#c22"/><rect x="6.2" y="1.0" width="1.2" height="1.2" fill="#c22"/><rect x="6.2" y="3.6" width="1.2" height="1.2" fill="#222"/><rect x="6.2" y="6.2" width="1.2" height="1.2" fill="#c22"/><rect x="6.2" y="8.8" width="1.2" height="1.2" fill="#c22"/><rect x="8.8" y="1.0" width="1.2" height="1.2" fill="#222"/><rect x="8.8" y="3.6" width="1.2" height="1.2" fill="#c22"/><rect x="8.8" y="6.2" width="1.2" height="1.2" fill="#c22"/><rect x="8.8" y="8.8" width="1.2" height="1.2" fill="#222"/></svg>
<div class="a" style="left:0px;top:453.5px;width:620px;height:17.5px;background:#f5f5f4;border-top:0.7px solid #c9c7c3;border-bottom:0.7px solid #d5d3cf;box-sizing:border-box"></div>
<div class="t" style="left:6.7px;top:454.30px;line-height:8px;font-size:6.4px;color:#1f6f6f;">Pads</div>
<div class="t" style="left:6.7px;top:463.00px;line-height:8px;font-size:6.4px;color:#1f6f6f;">26</div>
<div class="t" style="left:39.4px;top:454.30px;line-height:8px;font-size:6.4px;color:#3d5555;">Vias</div>
<div class="t" style="left:39.4px;top:463.00px;line-height:8px;font-size:6.4px;color:#3d5555;">0</div>
<div class="t" style="left:70.8px;top:454.30px;line-height:8px;font-size:6.4px;color:#3d4d3d;">trackSegm</div>
<div class="t" style="left:70.8px;top:463.00px;line-height:8px;font-size:6.4px;color:#3d4d3d;">42</div>
<div class="t" style="left:122.9px;top:454.30px;line-height:8px;font-size:6.4px;color:#1f6f7f;">Nodes</div>
<div class="t" style="left:122.9px;top:463.00px;line-height:8px;font-size:6.4px;color:#1f6f7f;">26</div>
<div class="t" style="left:160.5px;top:454.30px;line-height:8px;font-size:6.4px;color:#8f1f1f;">Nets</div>
<div class="t" style="left:160.5px;top:463.00px;line-height:8px;font-size:6.4px;color:#8f1f1f;">12</div>
<div class="t" style="left:193px;top:454.30px;line-height:8px;font-size:6.4px;color:#2f5f2f;">Links</div>
<div class="t" style="left:193px;top:463.00px;line-height:8px;font-size:6.4px;color:#2f5f2f;">15</div>
<div class="t" style="left:227px;top:454.30px;line-height:8px;font-size:6.4px;color:#2f5f3f;">Connect</div>
<div class="t" style="left:227px;top:463.00px;line-height:8px;font-size:6.4px;color:#2f5f3f;">15</div>
<div class="t" style="left:270.5px;top:454.30px;line-height:8px;font-size:6.4px;color:#2f2fb0;">Unconnected</div>
<div class="t" style="left:270.5px;top:463.00px;line-height:8px;font-size:6.4px;color:#2f2fb0;">0</div>
<div class="a" style="left:0px;top:471px;width:620px;height:11.5px;background:#edeceb"></div>
<div class="a" style="left:245px;top:473px;width:0.7px;height:9px;background:#cfcdc9"></div>
<div class="a" style="left:245.7px;top:473px;width:0.7px;height:9px;background:#fafafa"></div>
<div class="a" style="left:280px;top:473px;width:0.7px;height:9px;background:#cfcdc9"></div>
<div class="a" style="left:280.7px;top:473px;width:0.7px;height:9px;background:#fafafa"></div>
<div class="a" style="left:382.5px;top:473px;width:0.7px;height:9px;background:#cfcdc9"></div>
<div class="a" style="left:383.2px;top:473px;width:0.7px;height:9px;background:#fafafa"></div>
<div class="a" style="left:541px;top:473px;width:0.7px;height:9px;background:#cfcdc9"></div>
<div class="a" style="left:541.7px;top:473px;width:0.7px;height:9px;background:#fafafa"></div>
<div class="a" style="left:567px;top:473px;width:0.7px;height:9px;background:#cfcdc9"></div>
<div class="a" style="left:567.7px;top:473px;width:0.7px;height:9px;background:#fafafa"></div>
<div class="t" style="left:248px;top:473.50px;line-height:8px;font-size:6.2px;color:#2a2a2a;">Z 38100</div>
<div class="t" style="left:282.5px;top:473.50px;line-height:8px;font-size:6.2px;color:#2a2a2a;">X 20.193000</div>
<div class="t" style="left:325.5px;top:473.50px;line-height:8px;font-size:6.2px;color:#2a2a2a;">Y 6.477000</div>
<div class="t" style="left:384.2px;top:473.50px;line-height:8px;font-size:6.2px;color:#2a2a2a;">dx 20.193000</div>
<div class="t" style="left:431px;top:473.50px;line-height:8px;font-size:6.2px;color:#2a2a2a;">dy 6.477000</div>
<div class="t" style="left:473.7px;top:473.50px;line-height:8px;font-size:6.2px;color:#2a2a2a;">d 21.206338</div>
<div class="t" style="left:543.8px;top:473.50px;line-height:8px;font-size:6.2px;color:#2a2a2a;">mm</div>
<div class="a" style="left:0px;top:482.5px;width:620px;height:13.5px;background:linear-gradient(#eceae8,#e2e0dd);border-top:0.7px solid #c4c2be;box-sizing:border-box"></div>
<svg class="a" style="left:0.8px;top:485.6px" width="9.4" height="9.4" viewBox="0 0 9.4 9.4"><rect x="0.6" y="0.8" width="8.8" height="8" rx="1" fill="#8c4a9c" stroke="#4a2a5a" stroke-width="0.7"/><rect x="2" y="2.4" width="6" height="4.6" fill="#d8b8e0"/><path d="M2 4 H8 M2 5.6 H8" stroke="#6a3a7a" stroke-width="0.6"/></svg>
<div class="a" style="left:17.5px;top:484.3px;width:94.5px;height:11.4px;box-sizing:border-box;border:0.7px solid #cdcbc7;border-radius:2px;background:linear-gradient(#fdfdfd,#f1f0ef)"></div>
<svg class="a" style="left:21.5px;top:485.5px" width="8" height="9" viewBox="0 0 8 9"><rect x="0.6" y="0.8" width="6.8" height="7.4" fill="#f4e4c0" stroke="#a0783a" stroke-width="0.7"/><path d="M2 3 H6 M2 4.6 H6 M2 6.2 H6" stroke="#a0783a" stroke-width="0.5"/></svg>
<div class="t" style="left:31.7px;top:486.00px;line-height:8px;font-size:6.5px;color:#2a2a2a;">KiCad (2013-mar-13)-t...</div>
<div class="a" style="left:115px;top:484px;width:95.5px;height:12px;box-sizing:border-box;border:0.7px solid #a9a7a3;border-radius:2px;background:linear-gradient(#c9c8c5,#d6d5d2)"></div>
<svg class="a" style="left:120px;top:486px" width="6" height="8" viewBox="0 0 6 8"><path d="M1 7 L4.6 1.2" stroke="#444" stroke-width="1.1"/><path d="M3.6 0.8 L5.4 2" stroke="#444" stroke-width="1"/></svg>
<div class="t" style="left:129.5px;top:486.00px;line-height:8px;font-size:6.5px;color:#2a2a2a;">Pcbnew (2013-mar-13)...</div>
<div class="a" style="left:556px;top:484.5px;width:13px;height:11px;box-sizing:border-box;border:0.8px solid #2a3a5a;background:#5f7fae"></div>
<div class="a" style="left:559px;top:487px;width:7px;height:5.5px;background:#e6ecf5;border:0.5px solid #2a3a5a;box-sizing:border-box"></div>
<div class="a" style="left:570.5px;top:484.5px;width:10.5px;height:11px;box-sizing:border-box;border:0.6px solid #b8c4d8;background:#e3ebf6"></div>
<div class="a" style="left:573px;top:486px;width:5.5px;height:8px;background:#c6d6ee"></div>
<div class="a" style="left:582.5px;top:484.5px;width:12px;height:11px;background:#aaa7a2"></div>
<div class="a" style="left:595.5px;top:484.5px;width:11.5px;height:11px;background:#aaa7a2"></div>
<svg class="a" style="left:609.5px;top:485px" width="8" height="10" viewBox="0 0 8 10"><path d="M1.4 2.6 H6.6 L6 9.4 H2 Z" fill="#dcdcdc" stroke="#777" stroke-width="0.7"/><path d="M0.8 2.4 H7.2 M3 1.2 H5" stroke="#666" stroke-width="0.8"/><path d="M3 4 V8 M5 4 V8" stroke="#888" stroke-width="0.5"/></svg>
<div class="a" style="left:175.8px;top:42.5px;width:326.2px;height:324.8px;background:#ececeb;box-sizing:border-box;border:1px solid #f8f8f8;border-top:none"></div>
<div class="a" style="left:175.8px;top:42.5px;width:326.2px;height:11.5px;background:linear-gradient(#8fb1df 0%,#7aa1d8 18%,#6b95d0 60%,#648fcb 100%);box-sizing:border-box;border:0.7px solid #5c80b4;border-bottom:0.7px solid #557ab0;border-radius:2px 2px 0 0"></div>
<svg class="a" style="left:180.3px;top:44.5px" width="6" height="8" viewBox="0 0 6 8"><path d="M1 7 L4.6 1.2" stroke="#dfe8f5" stroke-width="1.1"/><path d="M3.6 0.8 L5.4 2" stroke="#dfe8f5" stroke-width="1"/></svg>
<div class="t" style="left:332px;top:44.20px;line-height:8px;font-size:6.5px;color:#e9f0fa;font-weight:bold;">Plot</div>
<svg class="a" style="left:492.5px;top:45.5px" width="6" height="6" viewBox="0 0 6 6"><path d="M1 1 L5 5 M5 1 L1 5" stroke="#dfe9f7" stroke-width="1.1"/></svg>
<div class="t" style="left:183.7px;top:58.60px;line-height:8px;font-size:6.3px;color:#2e2e2e;">Plot format:</div>
<div class="t" style="left:236px;top:58.60px;line-height:8px;font-size:6.3px;color:#2e2e2e;">Output directory:</div>
<div class="combo" style="left:183.7px;top:68.5px;width:47px;height:11.8px"></div>
<div class="t" style="left:187.8px;top:70.40px;line-height:8px;font-size:6.3px;color:#2e2e2e;">Gerber</div>
<svg class="a" style="left:223.5px;top:70.8px" width="5" height="7.5" viewBox="0 0 5 7.5"><path d="M1 2.8 L2.5 1 L4 2.8 M1 4.8 L2.5 6.6 L4 4.8" fill="none" stroke="#444" stroke-width="0.8"/></svg>
<div class="entry" style="left:236px;top:67.6px;width:213.5px;height:13px"></div>
<div class="t" style="left:238.6px;top:70.40px;line-height:8px;font-size:6.3px;color:#2e2e2e;">gerbers/</div>
<div class="btn" style="left:455.2px;top:67.8px;width:39.6px;height:12.6px"></div>
<div class="t" style="left:455px;top:70.40px;line-height:8px;font-size:6.3px;color:#2e2e2e;width:40.5px;text-align:center;">Browse...</div>
<div class="grp" style="left:182.6px;top:88.2px;width:75.6px;height:208.3px"></div>
<div class="a" style="left:184px;top:84px;width:22px;height:6px;background:#ececeb"></div>
<div class="t" style="left:184.8px;top:82.90px;line-height:8px;font-size:6.3px;color:#2e2e2e;">Layers</div>
<div class="entry" style="left:184.1px;top:91.3px;width:72.2px;height:203.4px;border-radius:1px;border-color:#b4b2ae"></div>
<div class="t" style="left:196.8px;top:93.00px;line-height:8px;font-size:6.3px;color:#2e2e2e;">F.Cu</div>
<div class="t" style="left:196.8px;top:104.16px;line-height:8px;font-size:6.3px;color:#2e2e2e;">B.Cu</div>
<div class="t" style="left:196.8px;top:115.32px;line-height:8px;font-size:6.3px;color:#2e2e2e;">F.Adhes</div>
<div class="t" style="left:196.8px;top:126.48px;line-height:8px;font-size:6.3px;color:#2e2e2e;">B.Adhes</div>
<div class="t" style="left:196.8px;top:137.64px;line-height:8px;font-size:6.3px;color:#2e2e2e;">F.Paste</div>
<div class="t" style="left:196.8px;top:148.80px;line-height:8px;font-size:6.3px;color:#2e2e2e;">B.Paste</div>
<div class="t" style="left:196.8px;top:159.96px;line-height:8px;font-size:6.3px;color:#2e2e2e;">F.SilkS</div>
<div class="t" style="left:196.8px;top:171.12px;line-height:8px;font-size:6.3px;color:#2e2e2e;">B.SilkS</div>
<div class="t" style="left:196.8px;top:182.28px;line-height:8px;font-size:6.3px;color:#2e2e2e;">F.Mask</div>
<div class="t" style="left:196.8px;top:193.44px;line-height:8px;font-size:6.3px;color:#2e2e2e;">B.Mask</div>
<div class="t" style="left:196.8px;top:204.60px;line-height:8px;font-size:6.3px;color:#2e2e2e;">Dwgs.User</div>
<div class="t" style="left:196.8px;top:215.76px;line-height:8px;font-size:6.3px;color:#2e2e2e;">Cmts.User</div>
<div class="t" style="left:196.8px;top:226.92px;line-height:8px;font-size:6.3px;color:#2e2e2e;">Eco1.User</div>
<div class="t" style="left:196.8px;top:238.08px;line-height:8px;font-size:6.3px;color:#2e2e2e;">Eco2.User</div>
<div class="t" style="left:196.8px;top:249.24px;line-height:8px;font-size:6.3px;color:#2e2e2e;">Edge.Cuts</div>
<div class="grp" style="left:260.7px;top:88.2px;width:235.3px;height:125.3px"></div>
<div class="a" style="left:263.5px;top:84px;width:27px;height:6px;background:#ececeb"></div>
<div class="t" style="left:264.3px;top:82.90px;line-height:8px;font-size:6.3px;color:#2e2e2e;">Options</div>
<div class="t" style="left:275.2px;top:92.80px;line-height:8px;font-size:6.3px;color:#2e2e2e;">Plot sheet reference on all layers</div>
<div class="t" style="left:275.2px;top:104.50px;line-height:8px;font-size:6.3px;color:#2e2e2e;">Plot pads on silkscreen</div>
<div class="t" style="left:275.2px;top:116.00px;line-height:8px;font-size:6.3px;color:#2e2e2e;">Plot module value on silkscreen</div>
<div class="t" style="left:275.2px;top:127.60px;line-height:8px;font-size:6.3px;color:#2e2e2e;">Plot module reference on silkscreen</div>
<div class="t" style="left:275.2px;top:139.40px;line-height:8px;font-size:6.3px;color:#2e2e2e;">Plot other module texts on silkscreen</div>
<div class="t" style="left:275.2px;top:151.00px;line-height:8px;font-size:6.3px;color:#2e2e2e;">Plot invisible texts on silkscreen</div>
<div class="t" style="left:275.2px;top:163.40px;line-height:8px;font-size:6.3px;color:#2e2e2e;">Do not tent vias</div>
<div class="t" style="left:275.2px;top:176.00px;line-height:8px;font-size:6.3px;color:#2e2e2e;">Exclude PCB edge layer from other layers</div>
<div class="t" style="left:275.2px;top:188.20px;line-height:8px;font-size:6.3px;color:#b9b7b3;">Mirrored plot</div>
<div class="t" style="left:275.2px;top:200.90px;line-height:8px;font-size:6.3px;color:#b9b7b3;">Negative plot</div>
<div class="t" style="left:412px;top:91.40px;line-height:8px;font-size:6.3px;color:#2e2e2e;">Drill marks:</div>
<div class="combo" style="left:412.5px;top:100px;width:79px;height:11.6px;background:#eeedec;border-color:#cfcdc9"></div>
<div class="t" style="left:417px;top:101.90px;line-height:8px;font-size:6.3px;color:#bdbbb7;">None</div>
<svg class="a" style="left:484px;top:102px" width="5" height="7.5" viewBox="0 0 5 7.5"><path d="M1 2.8 L2.5 1 L4 2.8 M1 4.8 L2.5 6.6 L4 4.8" fill="none" stroke="#c4c2be" stroke-width="0.8"/></svg>
<div class="t" style="left:412px;top:115.60px;line-height:8px;font-size:6.3px;color:#2e2e2e;">Scaling:</div>
<div class="combo" style="left:412.5px;top:124.3px;width:79px;height:11.6px;background:#eeedec;border-color:#cfcdc9"></div>
<div class="t" style="left:417px;top:126.20px;line-height:8px;font-size:6.3px;color:#bdbbb7;">1:1</div>
<svg class="a" style="left:484px;top:126.3px" width="5" height="7.5" viewBox="0 0 5 7.5"><path d="M1 2.8 L2.5 1 L4 2.8 M1 4.8 L2.5 6.6 L4 4.8" fill="none" stroke="#c4c2be" stroke-width="0.8"/></svg>
<div class="t" style="left:412px;top:140.00px;line-height:8px;font-size:6.3px;color:#2e2e2e;">Plot mode:</div>
<div class="combo" style="left:412.5px;top:149px;width:79px;height:11.6px;background:#eeedec;border-color:#cfcdc9"></div>
<div class="t" style="left:417px;top:150.90px;line-height:8px;font-size:6.3px;color:#bdbbb7;">Filled</div>
<svg class="a" style="left:484px;top:151px" width="5" height="7.5" viewBox="0 0 5 7.5"><path d="M1 2.8 L2.5 1 L4 2.8 M1 4.8 L2.5 6.6 L4 4.8" fill="none" stroke="#c4c2be" stroke-width="0.8"/></svg>
<div class="t" style="left:412px;top:165.00px;line-height:8px;font-size:6.3px;color:#2e2e2e;">Default line width (mm):</div>
<div class="entry" style="left:412.5px;top:174px;width:79px;height:11.6px"></div>
<div class="t" style="left:415.5px;top:175.90px;line-height:8px;font-size:6.3px;color:#2e2e2e;">2.000</div>
<div class="t" style="left:262px;top:215.70px;line-height:8px;font-size:6.3px;color:#2e2e2e;">Solder mask current settings:</div>
<div class="a" style="left:359px;top:219.6px;width:136.5px;height:0.7px;background:#c9c7c3"></div>
<div class="a" style="left:359px;top:220.3px;width:136.5px;height:0.6px;background:#fafafa"></div>
<div class="t" style="left:264.5px;top:226.70px;line-height:8px;font-size:6.3px;color:#2e2e2e;">Solder mask clearance:</div>
<div class="t" style="left:344.5px;top:226.70px;line-height:8px;font-size:6.3px;color:#2e2e2e;">0.000 mm</div>
<div class="t" style="left:264.5px;top:237.10px;line-height:8px;font-size:6.3px;color:#2e2e2e;">Solder mask min width:</div>
<div class="t" style="left:344.5px;top:237.10px;line-height:8px;font-size:6.3px;color:#2e2e2e;">0.000 mm</div>
<div class="grp" style="left:260.7px;top:257px;width:235.3px;height:40px"></div>
<div class="a" style="left:263.5px;top:252.5px;width:50px;height:6px;background:#ececeb"></div>
<div class="t" style="left:264.3px;top:251.60px;line-height:8px;font-size:6.3px;color:#2e2e2e;">Gerber Options</div>
<div class="t" style="left:275.2px;top:262.00px;line-height:8px;font-size:6.3px;color:#2e2e2e;">Use proper filename extensions</div>
<div class="t" style="left:275.2px;top:273.40px;line-height:8px;font-size:6.3px;color:#2e2e2e;">Subtract soldermask from silkscreen</div>
<div class="t" style="left:275.2px;top:284.80px;line-height:8px;font-size:6.3px;color:#2e2e2e;">Use auxiliary axis as origin</div>
<div class="grp" style="left:182.5px;top:304.3px;width:314px;height:38.6px"></div>
<div class="a" style="left:182.5px;top:300px;width:34px;height:8px;background:#ececeb"></div>
<div class="t" style="left:183.5px;top:299.60px;line-height:8px;font-size:6.3px;color:#2e2e2e;">Messages:</div>
<div class="entry" style="left:184px;top:308.3px;width:311px;height:33.2px;border-radius:1px;border-color:#b4b2ae"></div>
<div class="btn" style="left:338.7px;top:347.3px;width:39.5px;height:12.8px"></div>
<div class="t" style="left:338.7px;top:349.80px;line-height:8px;font-size:6.3px;color:#2e2e2e;width:39.5px;text-align:center;">Plot</div>
<div class="btn" style="left:384.3px;top:347.3px;width:62px;height:12.8px"></div>
<div class="t" style="left:384.3px;top:349.80px;line-height:8px;font-size:6.3px;color:#2e2e2e;width:62px;text-align:center;">Generate Drill File</div>
<div class="btn" style="left:452.3px;top:347.3px;width:41px;height:12.8px"></div>
<div class="t" style="left:452.3px;top:349.80px;line-height:8px;font-size:6.3px;color:#2e2e2e;width:41px;text-align:center;">Close</div>
<svg class="a" style="left:0;top:0" width="620" height="496" viewBox="0 0 620 496"><rect x="187.45" y="94.15" width="5.7" height="5.7" rx="0.8" fill="#fff" stroke="#8f8d89" stroke-width="0.7"/><path d="M188.40 96.90 L189.70 98.60 L192.60 94.60" fill="none" stroke="#2a2a2a" stroke-width="0.85"/><rect x="187.45" y="105.31" width="5.7" height="5.7" rx="0.8" fill="#fff" stroke="#8f8d89" stroke-width="0.7"/><path d="M188.40 108.06 L189.70 109.76 L192.60 105.76" fill="none" stroke="#2a2a2a" stroke-width="0.85"/><rect x="187.45" y="116.47" width="5.7" height="5.7" rx="0.8" fill="#fff" stroke="#8f8d89" stroke-width="0.7"/><rect x="187.45" y="127.63" width="5.7" height="5.7" rx="0.8" fill="#fff" stroke="#8f8d89" stroke-width="0.7"/><rect x="187.45" y="138.79" width="5.7" height="5.7" rx="0.8" fill="#fff" stroke="#8f8d89" stroke-width="0.7"/><rect x="187.45" y="149.95" width="5.7" height="5.7" rx="0.8" fill="#fff" stroke="#8f8d89" stroke-width="0.7"/><rect x="187.45" y="161.11" width="5.7" height="5.7" rx="0.8" fill="#fff" stroke="#8f8d89" stroke-width="0.7"/><path d="M188.40 163.86 L189.70 165.56 L192.60 161.56" fill="none" stroke="#2a2a2a" stroke-width="0.85"/><rect x="187.45" y="172.27" width="5.7" height="5.7" rx="0.8" fill="#fff" stroke="#8f8d89" stroke-width="0.7"/><path d="M188.40 175.02 L189.70 176.72 L192.60 172.72" fill="none" stroke="#2a2a2a" stroke-width="0.85"/><rect x="187.45" y="183.43" width="5.7" height="5.7" rx="0.8" fill="#fff" stroke="#8f8d89" stroke-width="0.7"/><rect x="187.45" y="194.59" width="5.7" height="5.7" rx="0.8" fill="#fff" stroke="#8f8d89" stroke-width="0.7"/><rect x="187.45" y="205.75" width="5.7" height="5.7" rx="0.8" fill="#fff" stroke="#8f8d89" stroke-width="0.7"/><rect x="187.45" y="216.91" width="5.7" height="5.7" rx="0.8" fill="#fff" stroke="#8f8d89" stroke-width="0.7"/><rect x="187.45" y="228.07" width="5.7" height="5.7" rx="0.8" fill="#fff" stroke="#8f8d89" stroke-width="0.7"/><rect x="187.45" y="239.23" width="5.7" height="5.7" rx="0.8" fill="#fff" stroke="#8f8d89" stroke-width="0.7"/><rect x="187.45" y="250.39" width="5.7" height="5.7" rx="0.8" fill="#fff" stroke="#8f8d89" stroke-width="0.7"/><rect x="265.95" y="93.95" width="5.7" height="5.7" rx="0.8" fill="#fff" stroke="#8f8d89" stroke-width="0.7"/><rect x="265.95" y="105.65" width="5.7" height="5.7" rx="0.8" fill="#fff" stroke="#8f8d89" stroke-width="0.7"/><rect x="265.95" y="117.15" width="5.7" height="5.7" rx="0.8" fill="#fff" stroke="#8f8d89" stroke-width="0.7"/><path d="M266.90 119.90 L268.20 121.60 L271.10 117.60" fill="none" stroke="#2a2a2a" stroke-width="0.85"/><rect x="265.95" y="128.75" width="5.7" height="5.7" rx="0.8" fill="#fff" stroke="#8f8d89" stroke-width="0.7"/><path d="M266.90 131.50 L268.20 133.20 L271.10 129.20" fill="none" stroke="#2a2a2a" stroke-width="0.85"/><rect x="265.95" y="140.55" width="5.7" height="5.7" rx="0.8" fill="#e3ebf7" stroke="#5b7fb5" stroke-width="0.7"/><path d="M266.90 143.30 L268.20 145.00 L271.10 141.00" fill="none" stroke="#2a2a2a" stroke-width="0.85"/><rect x="265.95" y="152.15" width="5.7" height="5.7" rx="0.8" fill="#fff" stroke="#8f8d89" stroke-width="0.7"/><rect x="265.95" y="164.55" width="5.7" height="5.7" rx="0.8" fill="#fff" stroke="#8f8d89" stroke-width="0.7"/><rect x="265.95" y="177.15" width="5.7" height="5.7" rx="0.8" fill="#fff" stroke="#8f8d89" stroke-width="0.7"/><path d="M266.90 179.90 L268.20 181.60 L271.10 177.60" fill="none" stroke="#2a2a2a" stroke-width="0.85"/><rect x="265.95" y="189.35" width="5.7" height="5.7" rx="0.8" fill="#f1f0ef" stroke="#cfcdca" stroke-width="0.7"/><rect x="265.95" y="202.05" width="5.7" height="5.7" rx="0.8" fill="#f1f0ef" stroke="#cfcdca" stroke-width="0.7"/><rect x="265.95" y="263.15" width="5.7" height="5.7" rx="0.8" fill="#fff" stroke="#8f8d89" stroke-width="0.7"/><path d="M266.90 265.90 L268.20 267.60 L271.10 263.60" fill="none" stroke="#2a2a2a" stroke-width="0.85"/><rect x="265.95" y="274.55" width="5.7" height="5.7" rx="0.8" fill="#fff" stroke="#8f8d89" stroke-width="0.7"/><rect x="265.95" y="285.95" width="5.7" height="5.7" rx="0.8" fill="#fff" stroke="#8f8d89" stroke-width="0.7"/></svg>
<svg class="a" style="left:387.4px;top:142.6px" width="8" height="11" viewBox="0 0 8 11"><path d="M1 0.8 V8.6 L2.9 6.9 L4.3 10 L5.6 9.4 L4.3 6.4 L6.8 6.3 Z" fill="#111" stroke="#fff" stroke-width="0.7"/></svg>
</body></html>
